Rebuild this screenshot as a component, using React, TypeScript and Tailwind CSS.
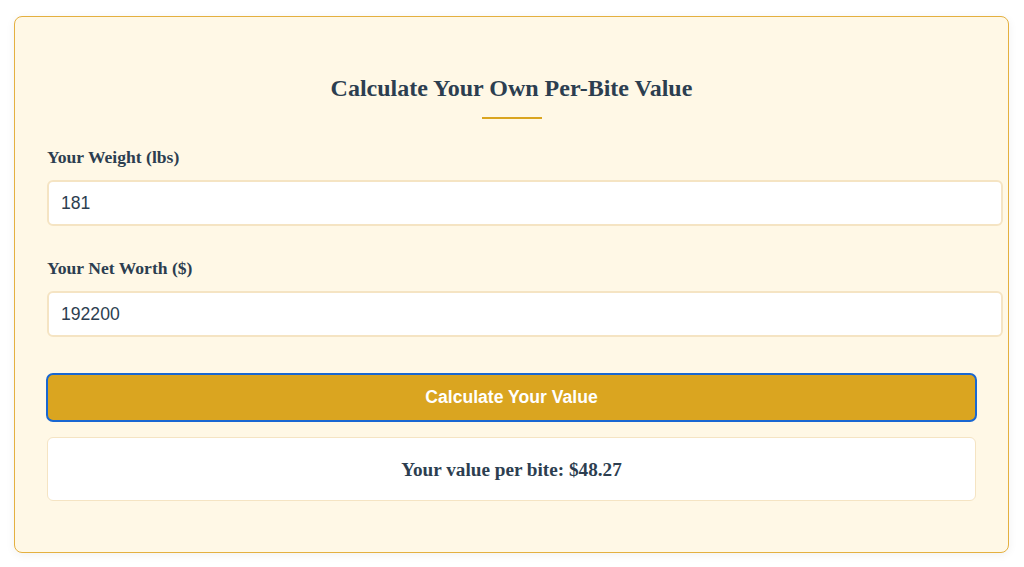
import React from "react";

export default function App() {
  return (
    <div className="w-[1024px] h-[567px] bg-white overflow-hidden">
      <div className="ml-[14px] mt-[16px] w-[995px] h-[537px] bg-[#fff8e6] border border-[#e4b040] rounded-[8px] shadow-[0_2px_10px_rgba(0,0,0,0.06)] px-[32px] pt-[32px] box-border flex flex-col">
        <h2 className="mt-[25px] text-center text-[24px] leading-[29px] font-bold text-[#2c3e50] font-['Liberation_Serif','Times_New_Roman',serif]">
          Calculate Your Own Per-Bite Value
        </h2>
        <div className="mx-auto mt-[14px] w-[60px] h-[2px] bg-[#daa520]" />

        <label className="block mt-[28px] h-[20px] leading-[20px] text-[17.6px] font-bold text-[#2c3e50] font-['Liberation_Serif','Times_New_Roman',serif]">
          Your Weight (lbs)
        </label>
        <div className="mt-[13px] w-[956px] h-[46px] bg-white border-2 border-[#f5e4c3] rounded-[6px] px-[12px] flex items-center box-border text-[17.6px] text-[#2c3e50] font-['Liberation_Sans',Arial,sans-serif]">
          181
        </div>

        <label className="block mt-[32px] h-[20px] leading-[20px] text-[17.6px] font-bold text-[#2c3e50] font-['Liberation_Serif','Times_New_Roman',serif]">
          Your Net Worth ($)
        </label>
        <div className="mt-[13px] w-[956px] h-[46px] bg-white border-2 border-[#f5e4c3] rounded-[6px] px-[12px] flex items-center box-border text-[17.6px] text-[#2c3e50] font-['Liberation_Sans',Arial,sans-serif]">
          192200
        </div>

        <div className="mt-[36px] -mx-[1px] h-[49px] rounded-[7px] border-2 border-[#1967d2] bg-[#daa520] flex items-center justify-center box-border">
          <span className="text-white font-bold text-[17.6px] font-['Liberation_Sans',Arial,sans-serif]">
            Calculate Your Value
          </span>
        </div>

        <div className="mt-[15px] h-[64px] pt-[2px] bg-white border border-[#f5e4c3] rounded-[6px] flex items-center justify-center box-border">
          <span className="text-[19.2px] font-bold text-[#2c3e50] font-['Liberation_Serif','Times_New_Roman',serif]">
            Your value per bite: $48.27
          </span>
        </div>
      </div>
    </div>
  );
}
